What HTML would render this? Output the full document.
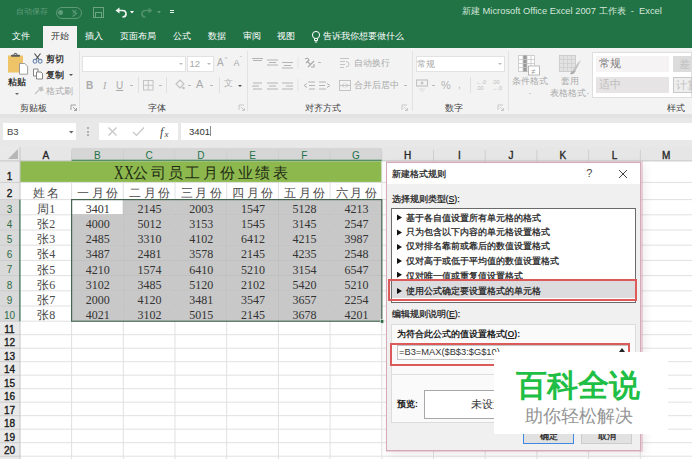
<!DOCTYPE html>
<html><head><meta charset="utf-8">
<style>
html,body{margin:0;padding:0;width:692px;height:459px;overflow:hidden;background:#f3f3f3;}
body{position:relative;font-family:"Liberation Sans",sans-serif;}
.abs{position:absolute;}
.t{position:absolute;white-space:nowrap;line-height:1;}
.h{-webkit-text-stroke:0.25px currentColor;}
</style></head><body>
<!-- spreadsheet grid -->
<svg class="abs" style="left:0;top:0" width="692" height="459" viewBox="0 0 692 459"><rect x="0" y="147" width="692" height="312" fill="#ffffff"/><rect x="0" y="147" width="692" height="13.900000000000006" fill="#e6e6e6"/><rect x="0" y="147" width="20" height="312" fill="#e9e9e9"/><rect x="71.6" y="148" width="310.20000000000005" height="12.900000000000006" fill="#d6d6d6"/><rect x="0" y="199.6" width="20" height="121.6" fill="#d9d9d9"/><polygon points="18,149 18,159 8,159" fill="#b7b7b7"/><rect x="20" y="160.9" width="361.8" height="21.5" fill="#8cb84e"/><rect x="71.6" y="199.6" width="310.20000000000005" height="121.6" fill="#c8c8c8"/><rect x="71.6" y="199.6" width="51.7" height="15.200000000000017" fill="#ffffff"/><line x1="71.6" y1="150" x2="71.6" y2="160.9" stroke="#cfcfcf" stroke-width="1"/><line x1="71.6" y1="182.4" x2="71.6" y2="459" stroke="#e1e1e1" stroke-width="1"/><line x1="123.3" y1="150" x2="123.3" y2="160.9" stroke="#cfcfcf" stroke-width="1"/><line x1="123.3" y1="182.4" x2="123.3" y2="459" stroke="#e1e1e1" stroke-width="1"/><line x1="175.0" y1="150" x2="175.0" y2="160.9" stroke="#cfcfcf" stroke-width="1"/><line x1="175.0" y1="182.4" x2="175.0" y2="459" stroke="#e1e1e1" stroke-width="1"/><line x1="226.7" y1="150" x2="226.7" y2="160.9" stroke="#cfcfcf" stroke-width="1"/><line x1="226.7" y1="182.4" x2="226.7" y2="459" stroke="#e1e1e1" stroke-width="1"/><line x1="278.4" y1="150" x2="278.4" y2="160.9" stroke="#cfcfcf" stroke-width="1"/><line x1="278.4" y1="182.4" x2="278.4" y2="459" stroke="#e1e1e1" stroke-width="1"/><line x1="330.1" y1="150" x2="330.1" y2="160.9" stroke="#cfcfcf" stroke-width="1"/><line x1="330.1" y1="182.4" x2="330.1" y2="459" stroke="#e1e1e1" stroke-width="1"/><line x1="381.8" y1="150" x2="381.8" y2="160.9" stroke="#cfcfcf" stroke-width="1"/><line x1="381.8" y1="160.9" x2="381.8" y2="459" stroke="#e1e1e1" stroke-width="1"/><line x1="433.5" y1="150" x2="433.5" y2="160.9" stroke="#cfcfcf" stroke-width="1"/><line x1="433.5" y1="160.9" x2="433.5" y2="459" stroke="#e1e1e1" stroke-width="1"/><line x1="485.2" y1="150" x2="485.2" y2="160.9" stroke="#cfcfcf" stroke-width="1"/><line x1="485.2" y1="160.9" x2="485.2" y2="459" stroke="#e1e1e1" stroke-width="1"/><line x1="536.9" y1="150" x2="536.9" y2="160.9" stroke="#cfcfcf" stroke-width="1"/><line x1="536.9" y1="160.9" x2="536.9" y2="459" stroke="#e1e1e1" stroke-width="1"/><line x1="588.6" y1="150" x2="588.6" y2="160.9" stroke="#cfcfcf" stroke-width="1"/><line x1="588.6" y1="160.9" x2="588.6" y2="459" stroke="#e1e1e1" stroke-width="1"/><line x1="640.3" y1="150" x2="640.3" y2="160.9" stroke="#cfcfcf" stroke-width="1"/><line x1="640.3" y1="160.9" x2="640.3" y2="459" stroke="#e1e1e1" stroke-width="1"/><line x1="20" y1="182.4" x2="692" y2="182.4" stroke="#e1e1e1" stroke-width="1"/><line x1="0" y1="182.4" x2="20" y2="182.4" stroke="#cdcdcd" stroke-width="1"/><line x1="20" y1="199.6" x2="692" y2="199.6" stroke="#e1e1e1" stroke-width="1"/><line x1="0" y1="199.6" x2="20" y2="199.6" stroke="#cdcdcd" stroke-width="1"/><line x1="20" y1="214.8" x2="692" y2="214.8" stroke="#e1e1e1" stroke-width="1"/><line x1="0" y1="214.8" x2="20" y2="214.8" stroke="#cdcdcd" stroke-width="1"/><line x1="20" y1="230.0" x2="692" y2="230.0" stroke="#e1e1e1" stroke-width="1"/><line x1="0" y1="230.0" x2="20" y2="230.0" stroke="#cdcdcd" stroke-width="1"/><line x1="20" y1="245.2" x2="692" y2="245.2" stroke="#e1e1e1" stroke-width="1"/><line x1="0" y1="245.2" x2="20" y2="245.2" stroke="#cdcdcd" stroke-width="1"/><line x1="20" y1="260.4" x2="692" y2="260.4" stroke="#e1e1e1" stroke-width="1"/><line x1="0" y1="260.4" x2="20" y2="260.4" stroke="#cdcdcd" stroke-width="1"/><line x1="20" y1="275.6" x2="692" y2="275.6" stroke="#e1e1e1" stroke-width="1"/><line x1="0" y1="275.6" x2="20" y2="275.6" stroke="#cdcdcd" stroke-width="1"/><line x1="20" y1="290.8" x2="692" y2="290.8" stroke="#e1e1e1" stroke-width="1"/><line x1="0" y1="290.8" x2="20" y2="290.8" stroke="#cdcdcd" stroke-width="1"/><line x1="20" y1="306.0" x2="692" y2="306.0" stroke="#e1e1e1" stroke-width="1"/><line x1="0" y1="306.0" x2="20" y2="306.0" stroke="#cdcdcd" stroke-width="1"/><line x1="20" y1="321.2" x2="692" y2="321.2" stroke="#e1e1e1" stroke-width="1"/><line x1="0" y1="321.2" x2="20" y2="321.2" stroke="#cdcdcd" stroke-width="1"/><line x1="20" y1="334.7" x2="692" y2="334.7" stroke="#e1e1e1" stroke-width="1"/><line x1="0" y1="334.7" x2="20" y2="334.7" stroke="#cdcdcd" stroke-width="1"/><line x1="20" y1="348.2" x2="692" y2="348.2" stroke="#e1e1e1" stroke-width="1"/><line x1="0" y1="348.2" x2="20" y2="348.2" stroke="#cdcdcd" stroke-width="1"/><line x1="20" y1="361.7" x2="692" y2="361.7" stroke="#e1e1e1" stroke-width="1"/><line x1="0" y1="361.7" x2="20" y2="361.7" stroke="#cdcdcd" stroke-width="1"/><line x1="20" y1="375.2" x2="692" y2="375.2" stroke="#e1e1e1" stroke-width="1"/><line x1="0" y1="375.2" x2="20" y2="375.2" stroke="#cdcdcd" stroke-width="1"/><line x1="20" y1="388.7" x2="692" y2="388.7" stroke="#e1e1e1" stroke-width="1"/><line x1="0" y1="388.7" x2="20" y2="388.7" stroke="#cdcdcd" stroke-width="1"/><line x1="20" y1="402.2" x2="692" y2="402.2" stroke="#e1e1e1" stroke-width="1"/><line x1="0" y1="402.2" x2="20" y2="402.2" stroke="#cdcdcd" stroke-width="1"/><line x1="20" y1="415.7" x2="692" y2="415.7" stroke="#e1e1e1" stroke-width="1"/><line x1="0" y1="415.7" x2="20" y2="415.7" stroke="#cdcdcd" stroke-width="1"/><line x1="20" y1="429.2" x2="692" y2="429.2" stroke="#e1e1e1" stroke-width="1"/><line x1="0" y1="429.2" x2="20" y2="429.2" stroke="#cdcdcd" stroke-width="1"/><line x1="20" y1="442.7" x2="692" y2="442.7" stroke="#e1e1e1" stroke-width="1"/><line x1="0" y1="442.7" x2="20" y2="442.7" stroke="#cdcdcd" stroke-width="1"/><line x1="20" y1="456.2" x2="692" y2="456.2" stroke="#e1e1e1" stroke-width="1"/><line x1="0" y1="456.2" x2="20" y2="456.2" stroke="#cdcdcd" stroke-width="1"/><line x1="20" y1="469.7" x2="692" y2="469.7" stroke="#e1e1e1" stroke-width="1"/><line x1="0" y1="469.7" x2="20" y2="469.7" stroke="#cdcdcd" stroke-width="1"/><line x1="123.3" y1="199.6" x2="123.3" y2="321.2" stroke="#bdbdbd" stroke-width="1"/><line x1="175.0" y1="199.6" x2="175.0" y2="321.2" stroke="#bdbdbd" stroke-width="1"/><line x1="226.7" y1="199.6" x2="226.7" y2="321.2" stroke="#bdbdbd" stroke-width="1"/><line x1="278.4" y1="199.6" x2="278.4" y2="321.2" stroke="#bdbdbd" stroke-width="1"/><line x1="330.1" y1="199.6" x2="330.1" y2="321.2" stroke="#bdbdbd" stroke-width="1"/><line x1="71.6" y1="214.8" x2="381.8" y2="214.8" stroke="#bdbdbd" stroke-width="1"/><line x1="71.6" y1="230.0" x2="381.8" y2="230.0" stroke="#bdbdbd" stroke-width="1"/><line x1="71.6" y1="245.2" x2="381.8" y2="245.2" stroke="#bdbdbd" stroke-width="1"/><line x1="71.6" y1="260.4" x2="381.8" y2="260.4" stroke="#bdbdbd" stroke-width="1"/><line x1="71.6" y1="275.6" x2="381.8" y2="275.6" stroke="#bdbdbd" stroke-width="1"/><line x1="71.6" y1="290.8" x2="381.8" y2="290.8" stroke="#bdbdbd" stroke-width="1"/><line x1="71.6" y1="306.0" x2="381.8" y2="306.0" stroke="#bdbdbd" stroke-width="1"/><line x1="0" y1="160.9" x2="692" y2="160.9" stroke="#c6c6c6" stroke-width="1"/><line x1="20" y1="147" x2="20" y2="459" stroke="#c6c6c6" stroke-width="1"/><rect x="71.6" y="159.70000000000002" width="310.20000000000005" height="1.2" fill="#4a8a5c"/><rect x="19.2" y="199.6" width="1.3" height="121.6" fill="#4f7d60"/><rect x="71.6" y="199.6" width="310.20000000000005" height="121.6" fill="none" stroke="#44664f" stroke-width="1.2"/><rect x="380.3" y="319.7" width="3.5" height="3.5" fill="#2f6a45" stroke="#fff" stroke-width="0.6"/><text x="45.8" y="158.6" text-anchor="middle" font-family="'Liberation Sans',sans-serif" font-size="10" fill="#262626" stroke="#262626" stroke-width="0.35">A</text><text x="97.4" y="158.6" text-anchor="middle" font-family="'Liberation Sans',sans-serif" font-size="10" fill="#217346" stroke="#217346" stroke-width="0">B</text><text x="149.2" y="158.6" text-anchor="middle" font-family="'Liberation Sans',sans-serif" font-size="10" fill="#217346" stroke="#217346" stroke-width="0">C</text><text x="200.8" y="158.6" text-anchor="middle" font-family="'Liberation Sans',sans-serif" font-size="10" fill="#217346" stroke="#217346" stroke-width="0">D</text><text x="252.5" y="158.6" text-anchor="middle" font-family="'Liberation Sans',sans-serif" font-size="10" fill="#217346" stroke="#217346" stroke-width="0">E</text><text x="304.2" y="158.6" text-anchor="middle" font-family="'Liberation Sans',sans-serif" font-size="10" fill="#217346" stroke="#217346" stroke-width="0">F</text><text x="356.0" y="158.6" text-anchor="middle" font-family="'Liberation Sans',sans-serif" font-size="10" fill="#217346" stroke="#217346" stroke-width="0">G</text><text x="407.6" y="158.6" text-anchor="middle" font-family="'Liberation Sans',sans-serif" font-size="10" fill="#262626" stroke="#262626" stroke-width="0.35">H</text><text x="459.4" y="158.6" text-anchor="middle" font-family="'Liberation Sans',sans-serif" font-size="10" fill="#262626" stroke="#262626" stroke-width="0.35">I</text><text x="511.0" y="158.6" text-anchor="middle" font-family="'Liberation Sans',sans-serif" font-size="10" fill="#262626" stroke="#262626" stroke-width="0.35">J</text><text x="562.8" y="158.6" text-anchor="middle" font-family="'Liberation Sans',sans-serif" font-size="10" fill="#262626" stroke="#262626" stroke-width="0.35">K</text><text x="614.5" y="158.6" text-anchor="middle" font-family="'Liberation Sans',sans-serif" font-size="10" fill="#262626" stroke="#262626" stroke-width="0.35">L</text><text x="666.1" y="158.6" text-anchor="middle" font-family="'Liberation Sans',sans-serif" font-size="10" fill="#262626" stroke="#262626" stroke-width="0.35">M</text><text x="9.5" y="180.2" text-anchor="middle" font-family="'Liberation Sans',sans-serif" font-size="10" fill="#1a1a1a" stroke="#1a1a1a" stroke-width="0.35">1</text><text x="9.5" y="197.4" text-anchor="middle" font-family="'Liberation Sans',sans-serif" font-size="10" fill="#1a1a1a" stroke="#1a1a1a" stroke-width="0.35">2</text><text x="9.5" y="212.6" text-anchor="middle" font-family="'Liberation Sans',sans-serif" font-size="10" fill="#2e6b47" stroke="#2e6b47" stroke-width="0">3</text><text x="9.5" y="227.8" text-anchor="middle" font-family="'Liberation Sans',sans-serif" font-size="10" fill="#2e6b47" stroke="#2e6b47" stroke-width="0">4</text><text x="9.5" y="243.0" text-anchor="middle" font-family="'Liberation Sans',sans-serif" font-size="10" fill="#2e6b47" stroke="#2e6b47" stroke-width="0">5</text><text x="9.5" y="258.2" text-anchor="middle" font-family="'Liberation Sans',sans-serif" font-size="10" fill="#2e6b47" stroke="#2e6b47" stroke-width="0">6</text><text x="9.5" y="273.4" text-anchor="middle" font-family="'Liberation Sans',sans-serif" font-size="10" fill="#2e6b47" stroke="#2e6b47" stroke-width="0">7</text><text x="9.5" y="288.6" text-anchor="middle" font-family="'Liberation Sans',sans-serif" font-size="10" fill="#2e6b47" stroke="#2e6b47" stroke-width="0">8</text><text x="9.5" y="303.8" text-anchor="middle" font-family="'Liberation Sans',sans-serif" font-size="10" fill="#2e6b47" stroke="#2e6b47" stroke-width="0">9</text><text x="9.5" y="319.0" text-anchor="middle" font-family="'Liberation Sans',sans-serif" font-size="10" fill="#2e6b47" stroke="#2e6b47" stroke-width="0">10</text><text x="9.5" y="332.5" text-anchor="middle" font-family="'Liberation Sans',sans-serif" font-size="10" fill="#1a1a1a" stroke="#1a1a1a" stroke-width="0.35">11</text><text x="9.5" y="346.0" text-anchor="middle" font-family="'Liberation Sans',sans-serif" font-size="10" fill="#1a1a1a" stroke="#1a1a1a" stroke-width="0.35">12</text><text x="9.5" y="359.5" text-anchor="middle" font-family="'Liberation Sans',sans-serif" font-size="10" fill="#1a1a1a" stroke="#1a1a1a" stroke-width="0.35">13</text><text x="9.5" y="373.0" text-anchor="middle" font-family="'Liberation Sans',sans-serif" font-size="10" fill="#1a1a1a" stroke="#1a1a1a" stroke-width="0.35">14</text><text x="9.5" y="386.5" text-anchor="middle" font-family="'Liberation Sans',sans-serif" font-size="10" fill="#1a1a1a" stroke="#1a1a1a" stroke-width="0.35">15</text><text x="9.5" y="400.0" text-anchor="middle" font-family="'Liberation Sans',sans-serif" font-size="10" fill="#1a1a1a" stroke="#1a1a1a" stroke-width="0.35">16</text><text x="9.5" y="413.5" text-anchor="middle" font-family="'Liberation Sans',sans-serif" font-size="10" fill="#1a1a1a" stroke="#1a1a1a" stroke-width="0.35">17</text><text x="9.5" y="427.0" text-anchor="middle" font-family="'Liberation Sans',sans-serif" font-size="10" fill="#1a1a1a" stroke="#1a1a1a" stroke-width="0.35">18</text><text x="9.5" y="440.5" text-anchor="middle" font-family="'Liberation Sans',sans-serif" font-size="10" fill="#1a1a1a" stroke="#1a1a1a" stroke-width="0.35">19</text><text x="9.5" y="454.0" text-anchor="middle" font-family="'Liberation Sans',sans-serif" font-size="10" fill="#1a1a1a" stroke="#1a1a1a" stroke-width="0.35">20</text><text transform="translate(118.7,179.3) scale(0.82,1.22)" text-anchor="middle" font-family="'Liberation Serif',serif" font-size="16" fill="#1f2a14">X</text><text transform="translate(128.9,179.3) scale(0.82,1.22)" text-anchor="middle" font-family="'Liberation Serif',serif" font-size="16" fill="#1f2a14">X</text><text x="140.0" y="177.8" text-anchor="middle" font-family="'Liberation Serif',serif" font-size="15" fill="#1f2a14">公</text><text x="158.1" y="177.8" text-anchor="middle" font-family="'Liberation Serif',serif" font-size="15" fill="#1f2a14">司</text><text x="175.3" y="177.8" text-anchor="middle" font-family="'Liberation Serif',serif" font-size="15" fill="#1f2a14">员</text><text x="192.8" y="177.8" text-anchor="middle" font-family="'Liberation Serif',serif" font-size="15" fill="#1f2a14">工</text><text x="210.3" y="177.8" text-anchor="middle" font-family="'Liberation Serif',serif" font-size="15" fill="#1f2a14">月</text><text x="227.8" y="177.8" text-anchor="middle" font-family="'Liberation Serif',serif" font-size="15" fill="#1f2a14">份</text><text x="245.3" y="177.8" text-anchor="middle" font-family="'Liberation Serif',serif" font-size="15" fill="#1f2a14">业</text><text x="262.8" y="177.8" text-anchor="middle" font-family="'Liberation Serif',serif" font-size="15" fill="#1f2a14">绩</text><text x="280.6" y="177.8" text-anchor="middle" font-family="'Liberation Serif',serif" font-size="15" fill="#1f2a14">表</text><text x="38.9" y="197" text-anchor="middle" font-family="'Liberation Serif',serif" font-size="12" fill="#4a4a4a">姓</text><text x="53.3" y="197" text-anchor="middle" font-family="'Liberation Serif',serif" font-size="12" fill="#4a4a4a">名</text><text x="83.3" y="197" text-anchor="middle" font-family="'Liberation Serif',serif" font-size="12" fill="#4a4a4a">一</text><text x="97.7" y="197" text-anchor="middle" font-family="'Liberation Serif',serif" font-size="12" fill="#4a4a4a">月</text><text x="112.1" y="197" text-anchor="middle" font-family="'Liberation Serif',serif" font-size="12" fill="#4a4a4a">份</text><text x="135.1" y="197" text-anchor="middle" font-family="'Liberation Serif',serif" font-size="12" fill="#4a4a4a">二</text><text x="149.5" y="197" text-anchor="middle" font-family="'Liberation Serif',serif" font-size="12" fill="#4a4a4a">月</text><text x="163.9" y="197" text-anchor="middle" font-family="'Liberation Serif',serif" font-size="12" fill="#4a4a4a">份</text><text x="186.8" y="197" text-anchor="middle" font-family="'Liberation Serif',serif" font-size="12" fill="#4a4a4a">三</text><text x="201.2" y="197" text-anchor="middle" font-family="'Liberation Serif',serif" font-size="12" fill="#4a4a4a">月</text><text x="215.6" y="197" text-anchor="middle" font-family="'Liberation Serif',serif" font-size="12" fill="#4a4a4a">份</text><text x="238.4" y="197" text-anchor="middle" font-family="'Liberation Serif',serif" font-size="12" fill="#4a4a4a">四</text><text x="252.8" y="197" text-anchor="middle" font-family="'Liberation Serif',serif" font-size="12" fill="#4a4a4a">月</text><text x="267.2" y="197" text-anchor="middle" font-family="'Liberation Serif',serif" font-size="12" fill="#4a4a4a">份</text><text x="290.2" y="197" text-anchor="middle" font-family="'Liberation Serif',serif" font-size="12" fill="#4a4a4a">五</text><text x="304.6" y="197" text-anchor="middle" font-family="'Liberation Serif',serif" font-size="12" fill="#4a4a4a">月</text><text x="319.0" y="197" text-anchor="middle" font-family="'Liberation Serif',serif" font-size="12" fill="#4a4a4a">份</text><text x="341.9" y="197" text-anchor="middle" font-family="'Liberation Serif',serif" font-size="12" fill="#4a4a4a">六</text><text x="356.3" y="197" text-anchor="middle" font-family="'Liberation Serif',serif" font-size="12" fill="#4a4a4a">月</text><text x="370.7" y="197" text-anchor="middle" font-family="'Liberation Serif',serif" font-size="12" fill="#4a4a4a">份</text><text x="46.2" y="212.8" text-anchor="middle" font-family="'Liberation Serif',serif" font-size="12" fill="#4a4a4a">周1</text><text x="97.8" y="212.8" text-anchor="middle" font-family="'Liberation Serif',serif" font-size="12" fill="#333333">3401</text><text x="149.6" y="212.8" text-anchor="middle" font-family="'Liberation Serif',serif" font-size="12" fill="#333333">2145</text><text x="201.2" y="212.8" text-anchor="middle" font-family="'Liberation Serif',serif" font-size="12" fill="#333333">2003</text><text x="252.9" y="212.8" text-anchor="middle" font-family="'Liberation Serif',serif" font-size="12" fill="#333333">1547</text><text x="304.6" y="212.8" text-anchor="middle" font-family="'Liberation Serif',serif" font-size="12" fill="#333333">5128</text><text x="356.4" y="212.8" text-anchor="middle" font-family="'Liberation Serif',serif" font-size="12" fill="#333333">4213</text><text x="46.2" y="228.0" text-anchor="middle" font-family="'Liberation Serif',serif" font-size="12" fill="#4a4a4a">张2</text><text x="97.8" y="228.0" text-anchor="middle" font-family="'Liberation Serif',serif" font-size="12" fill="#333333">4000</text><text x="149.6" y="228.0" text-anchor="middle" font-family="'Liberation Serif',serif" font-size="12" fill="#333333">5012</text><text x="201.2" y="228.0" text-anchor="middle" font-family="'Liberation Serif',serif" font-size="12" fill="#333333">3153</text><text x="252.9" y="228.0" text-anchor="middle" font-family="'Liberation Serif',serif" font-size="12" fill="#333333">1545</text><text x="304.6" y="228.0" text-anchor="middle" font-family="'Liberation Serif',serif" font-size="12" fill="#333333">3145</text><text x="356.4" y="228.0" text-anchor="middle" font-family="'Liberation Serif',serif" font-size="12" fill="#333333">2547</text><text x="46.2" y="243.2" text-anchor="middle" font-family="'Liberation Serif',serif" font-size="12" fill="#4a4a4a">张3</text><text x="97.8" y="243.2" text-anchor="middle" font-family="'Liberation Serif',serif" font-size="12" fill="#333333">2485</text><text x="149.6" y="243.2" text-anchor="middle" font-family="'Liberation Serif',serif" font-size="12" fill="#333333">3310</text><text x="201.2" y="243.2" text-anchor="middle" font-family="'Liberation Serif',serif" font-size="12" fill="#333333">4102</text><text x="252.9" y="243.2" text-anchor="middle" font-family="'Liberation Serif',serif" font-size="12" fill="#333333">6412</text><text x="304.6" y="243.2" text-anchor="middle" font-family="'Liberation Serif',serif" font-size="12" fill="#333333">4215</text><text x="356.4" y="243.2" text-anchor="middle" font-family="'Liberation Serif',serif" font-size="12" fill="#333333">3987</text><text x="46.2" y="258.4" text-anchor="middle" font-family="'Liberation Serif',serif" font-size="12" fill="#4a4a4a">张4</text><text x="97.8" y="258.4" text-anchor="middle" font-family="'Liberation Serif',serif" font-size="12" fill="#333333">3487</text><text x="149.6" y="258.4" text-anchor="middle" font-family="'Liberation Serif',serif" font-size="12" fill="#333333">2481</text><text x="201.2" y="258.4" text-anchor="middle" font-family="'Liberation Serif',serif" font-size="12" fill="#333333">3578</text><text x="252.9" y="258.4" text-anchor="middle" font-family="'Liberation Serif',serif" font-size="12" fill="#333333">2145</text><text x="304.6" y="258.4" text-anchor="middle" font-family="'Liberation Serif',serif" font-size="12" fill="#333333">4235</text><text x="356.4" y="258.4" text-anchor="middle" font-family="'Liberation Serif',serif" font-size="12" fill="#333333">2548</text><text x="46.2" y="273.6" text-anchor="middle" font-family="'Liberation Serif',serif" font-size="12" fill="#4a4a4a">张5</text><text x="97.8" y="273.6" text-anchor="middle" font-family="'Liberation Serif',serif" font-size="12" fill="#333333">4210</text><text x="149.6" y="273.6" text-anchor="middle" font-family="'Liberation Serif',serif" font-size="12" fill="#333333">1574</text><text x="201.2" y="273.6" text-anchor="middle" font-family="'Liberation Serif',serif" font-size="12" fill="#333333">6410</text><text x="252.9" y="273.6" text-anchor="middle" font-family="'Liberation Serif',serif" font-size="12" fill="#333333">5210</text><text x="304.6" y="273.6" text-anchor="middle" font-family="'Liberation Serif',serif" font-size="12" fill="#333333">3154</text><text x="356.4" y="273.6" text-anchor="middle" font-family="'Liberation Serif',serif" font-size="12" fill="#333333">6547</text><text x="46.2" y="288.8" text-anchor="middle" font-family="'Liberation Serif',serif" font-size="12" fill="#4a4a4a">张6</text><text x="97.8" y="288.8" text-anchor="middle" font-family="'Liberation Serif',serif" font-size="12" fill="#333333">3102</text><text x="149.6" y="288.8" text-anchor="middle" font-family="'Liberation Serif',serif" font-size="12" fill="#333333">3485</text><text x="201.2" y="288.8" text-anchor="middle" font-family="'Liberation Serif',serif" font-size="12" fill="#333333">5120</text><text x="252.9" y="288.8" text-anchor="middle" font-family="'Liberation Serif',serif" font-size="12" fill="#333333">2102</text><text x="304.6" y="288.8" text-anchor="middle" font-family="'Liberation Serif',serif" font-size="12" fill="#333333">5420</text><text x="356.4" y="288.8" text-anchor="middle" font-family="'Liberation Serif',serif" font-size="12" fill="#333333">5210</text><text x="46.2" y="304.0" text-anchor="middle" font-family="'Liberation Serif',serif" font-size="12" fill="#4a4a4a">张7</text><text x="97.8" y="304.0" text-anchor="middle" font-family="'Liberation Serif',serif" font-size="12" fill="#333333">2000</text><text x="149.6" y="304.0" text-anchor="middle" font-family="'Liberation Serif',serif" font-size="12" fill="#333333">4120</text><text x="201.2" y="304.0" text-anchor="middle" font-family="'Liberation Serif',serif" font-size="12" fill="#333333">3481</text><text x="252.9" y="304.0" text-anchor="middle" font-family="'Liberation Serif',serif" font-size="12" fill="#333333">3547</text><text x="304.6" y="304.0" text-anchor="middle" font-family="'Liberation Serif',serif" font-size="12" fill="#333333">3657</text><text x="356.4" y="304.0" text-anchor="middle" font-family="'Liberation Serif',serif" font-size="12" fill="#333333">2254</text><text x="46.2" y="319.2" text-anchor="middle" font-family="'Liberation Serif',serif" font-size="12" fill="#4a4a4a">张8</text><text x="97.8" y="319.2" text-anchor="middle" font-family="'Liberation Serif',serif" font-size="12" fill="#333333">4021</text><text x="149.6" y="319.2" text-anchor="middle" font-family="'Liberation Serif',serif" font-size="12" fill="#333333">3102</text><text x="201.2" y="319.2" text-anchor="middle" font-family="'Liberation Serif',serif" font-size="12" fill="#333333">5015</text><text x="252.9" y="319.2" text-anchor="middle" font-family="'Liberation Serif',serif" font-size="12" fill="#333333">2145</text><text x="304.6" y="319.2" text-anchor="middle" font-family="'Liberation Serif',serif" font-size="12" fill="#333333">3678</text><text x="356.4" y="319.2" text-anchor="middle" font-family="'Liberation Serif',serif" font-size="12" fill="#333333">4201</text></svg>

<!-- formula bar strip -->
<div class="abs" style="left:0;top:113.5px;width:692px;height:4.5px;background:#e3e3e3"></div>
<div class="abs" style="left:0;top:118px;width:692px;height:29px;background:#e8e8e8"></div>
<div class="abs" style="left:3px;top:123px;width:73px;height:17px;background:#fff"></div>
<div class="t" style="left:7px;top:127px;font-size:9.5px;color:#444">B3</div>
<svg class="abs" style="left:67.5px;top:129.5px" width="7" height="5"><polygon points="1,1 5.5,1 3.25,3.6" fill="#666"/></svg>
<div class="abs" style="left:87px;top:127px;width:2px;height:2px;background:#b0b0b0"></div>
<div class="abs" style="left:87px;top:130.5px;width:2px;height:2px;background:#b0b0b0"></div>
<div class="abs" style="left:87px;top:134px;width:2px;height:2px;background:#b0b0b0"></div>
<div class="abs" style="left:99px;top:123px;width:79px;height:17px;background:#fff"></div>
<svg class="abs" style="left:99px;top:123px" width="79" height="17">
 <path d="M9.5,4.5 L17.5,12.5 M17.5,4.5 L9.5,12.5" stroke="#c4c4c4" stroke-width="1.1" fill="none"/>
 <path d="M34,9 L37.5,12.5 L45,4.5" stroke="#c4c4c4" stroke-width="1.1" fill="none"/>
 <text x="61" y="13" font-family="Liberation Serif" font-style="italic" font-size="12" fill="#444">f</text>
 <text x="65.5" y="13.5" font-family="Liberation Serif" font-style="italic" font-size="9" fill="#444">x</text>
</svg>
<div class="abs" style="left:181px;top:123px;width:511px;height:17px;background:#fff"></div>
<div class="t" style="left:189px;top:127px;font-size:9.5px;color:#333">3401</div>
<div class="abs" style="left:209.5px;top:126px;width:1px;height:10px;background:#8a8a8a"></div>

<!-- title bar + tabs -->
<div class="abs" style="left:0;top:0;width:692px;height:48px;background:#217346"></div>
<div class="t" style="left:15.8px;top:7.8px;font-size:8.1px;color:#5e9b77">自动保存</div>
<div class="abs" style="left:55.5px;top:7px;width:26.5px;height:11.5px;border:1.2px solid #5e9b77;border-radius:7px;box-sizing:border-box"></div>
<div class="abs" style="left:58px;top:10.2px;width:5px;height:5px;border-radius:2.5px;background:#5e9b77"></div>
<svg class="abs" style="left:71px;top:9px" width="8" height="8"><path d="M1.5,1 L5.5,4.5 L1.5,7.5" stroke="#5e9b77" stroke-width="1.1" fill="none"/><path d="M5.5,1 L1.5,4.5" stroke="#5e9b77" stroke-width="1" fill="none"/></svg>
<svg class="abs" style="left:92px;top:6px" width="14" height="13"><rect x="1.5" y="1.5" width="10" height="10" fill="none" stroke="#6da583" stroke-width="1"/><rect x="3.5" y="6.5" width="6" height="5" fill="none" stroke="#6da583" stroke-width="1"/></svg>
<svg class="abs" style="left:114px;top:5px" width="50" height="14">
 <path d="M4,5.5 L8.5,5.5 Q12,5.5 12,9 Q12,12 8.5,12" stroke="#f0f5f1" stroke-width="1.7" fill="none"/>
 <polygon points="1.5,5.5 5.5,2.5 5.5,8.5" fill="#f0f5f1"/>
 <polygon points="16,6 20,6 18,8.5" fill="#fff"/>
 <path d="M36,5.5 L31.5,5.5 Q28,5.5 28,9 Q28,12 31.5,12" stroke="#4f9068" stroke-width="1.7" fill="none"/>
 <polygon points="38.5,5.5 34.5,2.5 34.5,8.5" fill="#4f9068"/>
 <polygon points="43,6 47,6 45,8.5" fill="#5e9b77"/>
</svg>
<div class="abs" style="left:169.5px;top:9.5px;width:4px;height:1.3px;background:#e8f0ea"></div>
<div class="abs" style="left:169.5px;top:12px;width:4px;height:1.3px;background:#e8f0ea"></div>
<div class="t" style="left:462px;top:6.5px;font-size:9.33px;color:#d4e6da">新建 Microsoft Office Excel 2007 工作表 &nbsp;- &nbsp;Excel</div>

<div class="abs" style="left:43px;top:26px;width:34px;height:22px;background:#f3f3f3"></div>
<div class="t" style="left:12px;top:32px;font-size:9px;color:#fff">文件</div>
<div class="t" style="left:50.5px;top:32px;font-size:9px;color:#333">开始</div>
<div class="t" style="left:85px;top:32px;font-size:9px;color:#fff">插入</div>
<div class="t" style="left:120px;top:32px;font-size:9px;color:#fff">页面布局</div>
<div class="t" style="left:172.5px;top:32px;font-size:9px;color:#fff">公式</div>
<div class="t" style="left:207.5px;top:32px;font-size:9px;color:#fff">数据</div>
<div class="t" style="left:242.5px;top:32px;font-size:9px;color:#fff">审阅</div>
<div class="t" style="left:276.5px;top:32px;font-size:9px;color:#fff">视图</div>
<svg class="abs" style="left:311px;top:30px" width="10" height="14"><circle cx="5" cy="5" r="3.6" fill="none" stroke="#fff" stroke-width="1"/><path d="M3.5,8.5 L3.5,10.5 L6.5,10.5 L6.5,8.5 M3.8,12 L6.2,12" stroke="#fff" stroke-width="1" fill="none"/></svg>
<div class="t" style="left:323px;top:32px;font-size:8.9px;color:#fff">告诉我你想要做什么</div>

<!-- RIBBON -->
<div class="abs" style="left:0;top:48px;width:692px;height:65.5px;background:#f3f3f3"></div>
<!-- group separators -->
<div class="abs" style="left:79px;top:51px;width:1px;height:60px;background:#e2e2e2"></div>
<div class="abs" style="left:247px;top:51px;width:1px;height:60px;background:#e2e2e2"></div>
<div class="abs" style="left:412px;top:51px;width:1px;height:60px;background:#e2e2e2"></div>
<div class="abs" style="left:507.5px;top:51px;width:1px;height:60px;background:#e2e2e2"></div>
<!-- group labels -->
<div class="t" style="left:20px;top:104px;font-size:8.8px;color:#444">剪贴板</div>
<div class="t" style="left:147.5px;top:104px;font-size:8.8px;color:#444">字体</div>
<div class="t" style="left:305px;top:104px;font-size:8.8px;color:#444">对齐方式</div>
<div class="t" style="left:445px;top:104px;font-size:8.8px;color:#444">数字</div>
<div class="t" style="left:667px;top:104px;font-size:8.8px;color:#444">样式</div>
<!-- launchers -->
<svg class="abs" style="left:70px;top:104px" width="8" height="8"><path d="M1,1 L6,1 M1,1 L1,6 M3,3 L6.5,6.5 M6.5,4 L6.5,6.5 L4,6.5" stroke="#999" stroke-width="0.9" fill="none"/></svg>
<svg class="abs" style="left:238px;top:104px" width="8" height="8"><path d="M1,1 L6,1 M1,1 L1,6 M3,3 L6.5,6.5 M6.5,4 L6.5,6.5 L4,6.5" stroke="#c4c4c4" stroke-width="0.9" fill="none"/></svg>
<svg class="abs" style="left:401px;top:104px" width="8" height="8"><path d="M1,1 L6,1 M1,1 L1,6 M3,3 L6.5,6.5 M6.5,4 L6.5,6.5 L4,6.5" stroke="#c4c4c4" stroke-width="0.9" fill="none"/></svg>
<svg class="abs" style="left:497px;top:104px" width="8" height="8"><path d="M1,1 L6,1 M1,1 L1,6 M3,3 L6.5,6.5 M6.5,4 L6.5,6.5 L4,6.5" stroke="#c4c4c4" stroke-width="0.9" fill="none"/></svg>

<!-- clipboard -->
<svg class="abs" style="left:6px;top:51px" width="24" height="26">
 <rect x="2" y="4.5" width="15" height="17" fill="#efc367"/>
 <rect x="5" y="3.8" width="9" height="2" rx="0.8" fill="#5a5a5a"/>
 <path d="M7.8,3.8 Q9.5,0.8 11.2,3.8" stroke="#5a5a5a" stroke-width="1.1" fill="none"/>
 <path d="M13.5,12.5 L18.8,12.5 L21.6,15.3 L21.6,23.2 L13.5,23.2 Z" fill="#fff" stroke="#8a8a8a" stroke-width="0.8"/>
</svg>
<div class="t h" style="left:7.5px;top:78px;font-size:8.8px;color:#222">粘贴</div>
<svg class="abs" style="left:14px;top:92px" width="6" height="4"><polygon points="1,1 5,1 3,3" fill="#666"/></svg>
<svg class="abs" style="left:32px;top:53px" width="12" height="11">
 <path d="M2.5,0.5 L7.5,7 M8.5,0.5 L3.5,7" stroke="#505050" stroke-width="1.2" fill="none"/>
 <circle cx="3" cy="8.3" r="1.9" fill="none" stroke="#6a86b0" stroke-width="1.1"/>
 <circle cx="8.2" cy="8.3" r="1.9" fill="none" stroke="#6a86b0" stroke-width="1.1"/>
</svg>
<div class="t h" style="left:45.5px;top:54.5px;font-size:8.8px;color:#222">剪切</div>
<svg class="abs" style="left:32px;top:68px" width="12" height="12">
 <path d="M1.5,1 L6,1 L6,8 L1.5,8 Z" fill="#fff" stroke="#777" stroke-width="0.9"/>
 <path d="M4.5,4 L9,4 L10.5,5.5 L10.5,11 L4.5,11 Z" fill="#fff" stroke="#777" stroke-width="0.9"/>
</svg>
<div class="t h" style="left:45.5px;top:70.5px;font-size:8.8px;color:#222">复制</div>
<svg class="abs" style="left:68px;top:73px" width="6" height="4"><polygon points="1,1 5,1 3,3" fill="#555"/></svg>
<svg class="abs" style="left:34px;top:86px" width="10" height="9"><path d="M1,8 L6,3 M5,2 L8,1 L9,4 L7,5 Z" stroke="#c4c4c4" stroke-width="1.2" fill="#c4c4c4"/></svg>
<div class="t" style="left:46px;top:86.5px;font-size:8.8px;color:#aaa">格式刷</div>

<!-- font -->
<div class="abs" style="left:81.5px;top:56px;width:104.5px;height:15.5px;background:#fff;box-shadow:inset 0 0 0 1px #e2e2e2"></div>
<svg class="abs" style="left:178px;top:62px" width="6" height="4"><polygon points="1,1 5,1 3,3" fill="#bbb"/></svg>
<div class="abs" style="left:187px;top:56px;width:26.5px;height:15.5px;background:#fff;box-shadow:inset 0 0 0 1px #e2e2e2"></div>
<div class="t" style="left:189.5px;top:59px;font-size:9.5px;color:#a8a8a8">12</div>
<svg class="abs" style="left:206px;top:62px" width="6" height="4"><polygon points="1,1 5,1 3,3" fill="#bbb"/></svg>
<div class="t" style="left:217px;top:58px;font-size:10px;color:#aaa">A</div>
<div class="t" style="left:224.5px;top:56px;font-size:6px;color:#aaa">^</div>
<div class="t" style="left:233.5px;top:59px;font-size:9px;color:#aaa">A</div>
<div class="t" style="left:240px;top:56px;font-size:5px;color:#aaa">ˇ</div>
<div class="t" style="left:86px;top:80.5px;font-size:10px;font-weight:bold;color:#aaa">B</div>
<div class="t" style="left:103px;top:80.5px;font-size:10px;font-style:italic;font-family:'Liberation Serif',serif;color:#aaa">I</div>
<div class="t" style="left:116px;top:80.5px;font-size:10px;text-decoration:underline;color:#aaa">U</div>
<div class="abs" style="left:130px;top:85px;width:3px;height:1px;background:#bbb"></div>
<div class="abs" style="left:138px;top:77px;width:1px;height:16px;background:#e0e0e0"></div>
<svg class="abs" style="left:143px;top:80px" width="11" height="11"><rect x="0.5" y="0.5" width="9.5" height="9.5" fill="none" stroke="#c4c4c4" stroke-width="1"/><path d="M5.25,0.5 L5.25,10 M0.5,5.25 L10,5.25" stroke="#c4c4c4" stroke-width="1"/></svg>
<div class="abs" style="left:158.5px;top:85px;width:3px;height:1px;background:#bbb"></div>
<div class="abs" style="left:166px;top:77px;width:1px;height:16px;background:#e0e0e0"></div>
<svg class="abs" style="left:174px;top:79px" width="11" height="12"><path d="M2,5 L6,1 L10,5 L6,9 Z" fill="none" stroke="#c0c0c0" stroke-width="1.1"/><circle cx="9.5" cy="9" r="1.3" fill="#c0c0c0"/></svg>
<div class="abs" style="left:188px;top:85px;width:3px;height:1px;background:#bbb"></div>
<div class="t" style="left:196px;top:79px;font-size:11px;color:#aaa">A</div>
<div class="abs" style="left:210px;top:85px;width:3px;height:1px;background:#bbb"></div>
<div class="abs" style="left:219px;top:77px;width:1px;height:16px;background:#e0e0e0"></div>
<div class="t" style="left:224px;top:79px;font-size:9px;color:#b4b4b4">文</div>
<svg class="abs" style="left:237px;top:84px" width="6" height="4"><polygon points="1,1 5,1 3,3" fill="#555"/></svg>

<!-- alignment -->
<svg class="abs" style="left:250px;top:55px" width="80" height="40">
 <g stroke="#b4b4b4" stroke-width="1" fill="none">
  <path d="M2,3.5 L13,3.5 M3,5.5 L12,5.5"/>
  <path d="M17,5 L28,5 M19,7.5 L26,7.5 M17,10 L28,10"/>
  <path d="M32,7.5 L43,7.5 M34,10.5 L41,10.5 M32,13 L43,13"/>
  <path d="M3,28 L12,28 M2,31 L9,31 M3,34 L12,34"/>
  <path d="M17,28 L28,28 M19,31 L26,31 M17,34 L28,34"/>
  <path d="M32,28 L43,28 M36,31 L43,31 M32,34 L43,34"/>
 </g>
 <path d="M48,2 L48,14 M48,24 L48,36" stroke="#e4e4e4" stroke-width="1"/>
 <g stroke="#a8a8a8" stroke-width="1.1" fill="none">
  <path d="M55,4 Q58,2 59,5 L56,8 M57,6 L60,9 M58,12 L64,6 M61,12 L64,12 L64,9"/>
 </g>
 <path d="M68,7.5 L71,7.5" stroke="#bbb" stroke-width="1"/>
 <g stroke="#b4b4b4" stroke-width="1" fill="none">
  <path d="M58,27 L65,27 M59,30.5 L65,30.5 M59,34 L65,34 M54,30.5 L57,28.5 M54,30.5 L57,32.5"/>
  <path d="M69,27 L76,27 M69,30.5 L75,30.5 M69,34 L76,34 M77,28.5 L80,30.5 L77,32.5"/>
 </g>
</svg>
<svg class="abs" style="left:339px;top:57px" width="13" height="36">
 <g stroke="#c4c4c4" stroke-width="1" fill="none">
  <path d="M1,1.5 L10,1.5 M1,4.5 L6,4.5 M1,7.5 L6,7.5 M1,10.5 L5,10.5 M7,4.5 Q10,4.5 10,7.5 Q10,10 7,10"/>
  <rect x="0.5" y="23.5" width="11" height="10"/>
  <path d="M0.5,28.5 L11.5,28.5 M3,28.5 L5,26.5 M3,28.5 L5,30.5 M9,28.5 L7,26.5 M9,28.5 L7,30.5"/>
 </g>
</svg>
<div class="t" style="left:353.5px;top:59px;font-size:8.8px;color:#aaa">自动换行</div>
<div class="t" style="left:353.5px;top:81px;font-size:8.8px;color:#aaa">合并后居中</div>
<div class="abs" style="left:403.5px;top:85px;width:3px;height:1px;background:#bbb"></div>

<!-- number -->
<div class="abs" style="left:415.5px;top:56px;width:89px;height:15.5px;background:#fff;box-shadow:inset 0 0 0 1px #e2e2e2"></div>
<div class="t" style="left:416.5px;top:59.5px;font-size:8.8px;color:#aaa">常规</div>
<svg class="abs" style="left:497px;top:62px" width="6" height="4"><polygon points="1,1 5,1 3,3" fill="#bbb"/></svg>
<svg class="abs" style="left:416px;top:79px" width="14" height="14"><rect x="0.5" y="1" width="11" height="6" fill="none" stroke="#c4c4c4" stroke-width="1.2"/><circle cx="6" cy="4" r="1.5" fill="#c4c4c4"/><path d="M3,10 L9,10 M4,12 L8,12" stroke="#ddd" stroke-width="1"/></svg>
<div class="abs" style="left:432px;top:85px;width:3px;height:1px;background:#bbb"></div>
<div class="t" style="left:441px;top:80px;font-size:11px;color:#b4b4b4">%</div>
<div class="t" style="left:458px;top:80px;font-size:10px;color:#b4b4b4">,</div>
<div class="abs" style="left:470px;top:77px;width:1px;height:16px;background:#e0e0e0"></div>
<div class="t" style="left:476px;top:79px;font-size:5.5px;line-height:6px;color:#bbb;white-space:pre">←.0
.00</div>
<div class="t" style="left:492px;top:79px;font-size:5.5px;line-height:6px;color:#bbb;white-space:pre">.00
→.0</div>

<!-- styles -->
<svg class="abs" style="left:518px;top:55px" width="23" height="21">
 <g fill="#fff" stroke="#c6c6c6" stroke-width="0.8">
  <rect x="0.5" y="0.5" width="16" height="16"/>
 </g>
 <rect x="5" y="0.5" width="4" height="16" fill="#999"/>
 <path d="M0.5,4.5 L16.5,4.5 M0.5,8.5 L16.5,8.5 M0.5,12.5 L16.5,12.5 M5,0.5 L5,16.5 M9,0.5 L9,16.5 M13,0.5 L13,16.5" stroke="#c6c6c6" stroke-width="0.8"/>
 <rect x="10.5" y="11" width="11" height="9" fill="#fff" stroke="#aaa" stroke-width="0.8"/>
 <text x="13.5" y="18.5" font-size="7" fill="#888" font-family="Liberation Sans">≠</text>
</svg>
<div class="t" style="left:511.5px;top:77px;font-size:8.8px;color:#aaa">条件格式</div>
<div class="abs" style="left:529px;top:92.5px;width:2px;height:1px;background:#ccc"></div>
<svg class="abs" style="left:559px;top:55px" width="24" height="21">
 <rect x="0.5" y="0.5" width="16" height="16" fill="#e2e2e2" stroke="#c6c6c6" stroke-width="0.8"/>
 <path d="M0.5,4.5 L16.5,4.5 M0.5,8.5 L16.5,8.5 M0.5,12.5 L16.5,12.5 M4.5,0.5 L4.5,16.5 M8.5,0.5 L8.5,16.5 M12.5,0.5 L12.5,16.5" stroke="#cfcfcf" stroke-width="0.8"/>
 <path d="M14,15 Q18,8 22,5 Q19,12 15,18 Z" fill="#c4c4c4"/>
 <path d="M11,19 Q13,15 16,16 Q15,20 11,19 Z" fill="#aaa"/>
</svg>
<div class="t" style="left:560.5px;top:77px;font-size:8.8px;color:#aaa">套用</div>
<div class="t" style="left:549.5px;top:89px;font-size:8.8px;color:#aaa">表格格式</div>
<div class="abs" style="left:587px;top:93px;width:2px;height:1px;background:#ccc"></div>
<div class="abs" style="left:592px;top:51.5px;width:100px;height:46px;background:#fff;box-shadow:inset 0 0 0 1px #dedede"></div>
<div class="abs" style="left:596px;top:55.5px;width:72.5px;height:16.5px;background:#f6f3f4"></div>
<div class="t" style="left:599px;top:58.5px;font-size:10.5px;font-family:'Liberation Serif',serif;color:#7a7a7a">常规</div>
<div class="abs" style="left:596px;top:77px;width:72.5px;height:15.5px;background:#e7e4e5"></div>
<div class="t" style="left:599px;top:79.5px;font-size:10.5px;font-family:'Liberation Serif',serif;color:#bdbdbd">适中</div>
<div class="abs" style="left:673px;top:55.5px;width:19px;height:16.5px;background:#dcdcdc"></div>
<div class="t" style="left:679px;top:58.5px;font-size:10.5px;color:#c2c2c2">差</div>
<div class="abs" style="left:673px;top:77px;width:19px;height:15.5px;background:#eee;box-shadow:inset 0 0 0 1px #c8c8c8"></div>
<div class="t" style="left:676px;top:79.5px;font-size:10.5px;color:#c2c2c2">计算</div>

<!-- DIALOG -->
<div class="abs" style="left:386px;top:162px;width:254.5px;height:289px;border:1px solid #d6a9b6;box-sizing:border-box;background:#f0f0f0;box-shadow:1px 0 0 1px rgba(214,169,182,0.45), 3px 3px 9px rgba(90,60,70,0.12)"></div>
<div class="abs" style="left:387px;top:163px;width:252.5px;height:20.5px;background:#fff"></div>
<div class="t h" style="left:391.5px;top:169.5px;font-size:8.8px;color:#222">新建格式规则</div>
<div class="t" style="left:586.3px;top:167.5px;font-size:11px;color:#444">?</div>
<svg class="abs" style="left:618px;top:169px" width="10" height="10"><path d="M1,1 L9,9 M9,1 L1,9" stroke="#444" stroke-width="1"/></svg>
<div class="t h" style="left:391.5px;top:195px;font-size:8.8px;color:#222">选择规则类型(<u>S</u>):</div>
<!-- list box -->
<div class="abs" style="left:390.5px;top:208px;width:245px;height:95px;background:#fff;border:1px solid #6a6a6a;box-sizing:border-box;overflow:hidden">
</div>
<div class="abs" style="left:391.5px;top:280.5px;width:243px;height:17.5px;background:#dcdcdf"></div>
<div class="t h" style="left:406px;top:210.5px;font-size:8.8px;line-height:14.4px;color:#222;white-space:pre">基于各自值设置所有单元格的格式
只为包含以下内容的单元格设置格式
仅对排名靠前或靠后的数值设置格式
仅对高于或低于平均值的数值设置格式
</div>
<svg class="abs" style="left:396px;top:212px" width="8" height="80"><g fill="#111"><polygon points="1,2.6 6,5.6 1,8.6"/><polygon points="1,17.5 6,20.5 1,23.5"/><polygon points="1,31.9 6,34.9 1,37.9"/><polygon points="1,46.0 6,49.0 1,52.0"/><polygon points="1,59.8 6,62.8 1,65.8"/></g></svg>
<div class="abs" style="left:391.5px;top:280.5px;width:243px;height:17.5px;background:#dcdcdf"></div>
<div class="abs" style="left:400px;top:268px;width:230px;height:11px;overflow:hidden"><div class="t h" style="left:6px;top:3.5px;font-size:8.8px;color:#222">仅对唯一值或重复值设置格式</div></div>
<div class="abs" style="left:391.5px;top:280.5px;width:243px;height:17.5px;background:#dcdcdf"></div>
<svg class="abs" style="left:396px;top:287px" width="8" height="10"><polygon points="1,1 6,4 1,7" fill="#111"/></svg>
<div class="t h" style="left:406px;top:287px;font-size:8.8px;color:#222">使用公式确定要设置格式的单元格</div>
<div class="abs" style="left:388.3px;top:278.8px;width:248.4px;height:22.5px;border:2.1px solid #dc5a5a;box-sizing:border-box"></div>

<div class="t h" style="left:392px;top:309.5px;font-size:8.8px;color:#222">编辑规则说明(<u>E</u>):</div>
<div class="abs" style="left:390.5px;top:323.5px;width:245px;height:99px;background:#fafafa;border:1px solid #dcdcdc;box-sizing:border-box"></div>
<div class="t" style="left:396.5px;top:329.5px;font-size:8.8px;font-weight:bold;color:#222">为符合此公式的值设置格式(<u>O</u>):</div>
<div class="abs" style="left:396.5px;top:345px;width:233px;height:15px;background:#fff;border:1px solid #c4c4c4;box-sizing:border-box"></div>
<div class="t" style="left:399px;top:347.5px;font-size:9.3px;color:#333">=B3=MAX($B$3:$G$10)</div>
<svg class="abs" style="left:617px;top:346px" width="10" height="8"><polygon points="2,6 8,6 5,2" fill="#222"/></svg>
<div class="abs" style="left:390.3px;top:342.7px;width:239.5px;height:23.5px;border:2.1px solid #dc5a5a;box-sizing:border-box"></div>
<div class="abs" style="left:391px;top:374px;width:244px;height:1px;background:#dedede"></div>
<div class="t" style="left:397px;top:400px;font-size:8.8px;font-weight:bold;color:#222">预览:</div>
<div class="abs" style="left:423.5px;top:390px;width:200px;height:28.5px;background:#fff;border:1px solid #a8a8a8;box-sizing:border-box"></div>
<div class="t" style="left:470.5px;top:399px;font-size:10.5px;color:#333">未设置格式</div>
<div class="abs" style="left:523px;top:428px;width:51px;height:16px;background:#e1e1e1;border:1.6px solid #3f8ae0;box-sizing:border-box"></div>
<div class="t h" style="left:539.5px;top:432px;font-size:8.8px;color:#222">确定</div>
<div class="abs" style="left:581.3px;top:428px;width:50.5px;height:16px;background:#e1e1e1;border:1px solid #cccccc;box-sizing:border-box"></div>
<div class="t h" style="left:598px;top:432px;font-size:8.8px;color:#222">取消</div>

<!-- watermark -->
<div class="abs" style="left:494px;top:351.5px;width:173.5px;height:82px;background:#fff"></div>
<div class="t" style="left:516px;top:369.5px;font-size:31.2px;font-weight:bold;color:#1fbf45;transform:scaleY(1.0);transform-origin:0 0">百科全说</div>
<div class="t" style="left:524.5px;top:406.8px;font-size:18.2px;color:#959595">助你轻松解决</div>
</body></html>
